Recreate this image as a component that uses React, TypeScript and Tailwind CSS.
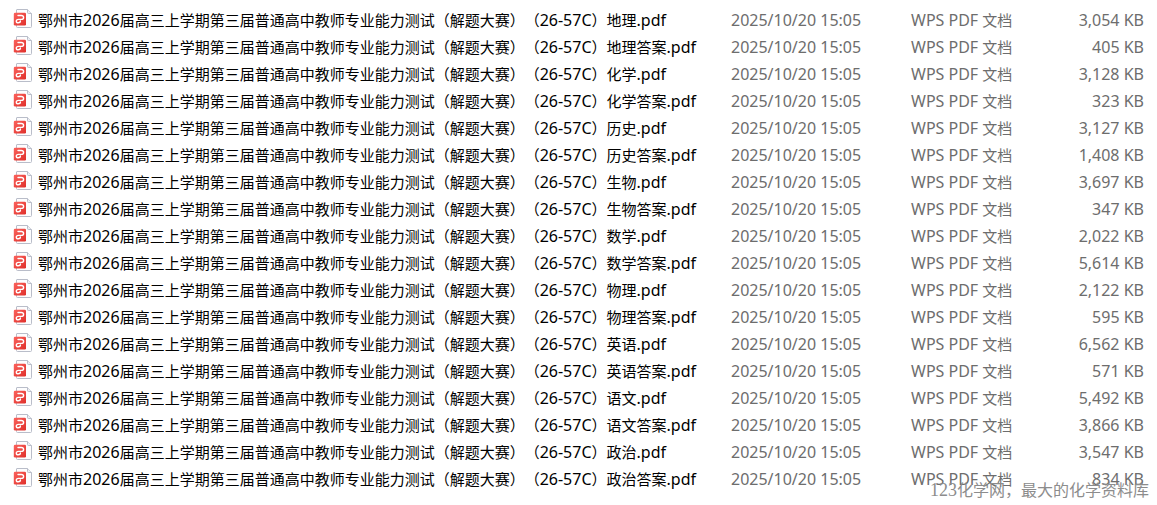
const subjects = ["地理", "化学", "历史", "生物", "数学", "物理", "英语", "语文", "政治"];

const sizes = [
  "3,054 KB", "405 KB", "3,128 KB", "323 KB", "3,127 KB", "1,408 KB",
  "3,697 KB", "347 KB", "2,022 KB", "5,614 KB", "2,122 KB", "595 KB",
  "6,562 KB", "571 KB", "5,492 KB", "3,866 KB", "3,547 KB", "834 KB",
];

const files = sizes.map((size, i) => ({
  title: subjects[Math.floor(i / 2)] + (i % 2 ? "答案" : ""),
  date: "2025/10/20 15:05",
  size,
}));

function PdfIcon() {
  return (
    <svg className="shrink-0" width="20" height="23" viewBox="0 0 20 23" fill="none" aria-hidden="true">
      <defs>
        <linearGradient id="red" x1="0" y1="0" x2="1" y2="1">
          <stop offset="0" stopColor="#fb625c" />
          <stop offset="1" stopColor="#df302b" />
        </linearGradient>
      </defs>
      <path d="M5 0.5H15.5L19.5 4.5V17.5Q19.5 18.5 18.5 18.5H5.5Q4.5 18.5 4.5 17.5V1Q4.5 0.5 5 0.5Z" fill="#fdfdfe" stroke="#b9bdc9" />
      <path d="M15.5 0.5V3.5Q15.5 4.5 16.5 4.5H19.5" fill="#eceef3" stroke="#b9bdc9" />
      <rect x="1.8" y="3.7" width="12.2" height="12.8" rx="1.3" fill="url(#red)" />
      <path
        d="M6 6.5H9.2Q11.6 6.5 11.6 8.5Q11.6 10.4 9.2 10.4H6.5Q4.3 10.4 4.3 12.2Q4.3 13.8 6.2 13.8Q8.4 13.8 8.4 12"
        stroke="#fff"
        strokeWidth="1.4"
        strokeLinecap="round"
      />
    </svg>
  );
}

// latin letters and digits are set a little larger than the chinese text
function Latin({ children }: { children: string }) {
  return <span className="text-[16px] leading-none">{children}</span>;
}

function App() {
  return (
    <div className="relative min-h-screen bg-white pt-[7px] pr-[13px] pl-3 pb-3 font-['Noto_Sans','Noto_Sans_CJK_SC',sans-serif] text-[15px] leading-[27px] whitespace-nowrap [text-spacing-trim:space-all]">
      <table className="w-full table-fixed border-collapse">
        <colgroup>
          <col />
          <col className="w-[180px]" />
          <col className="w-[120px]" />
          <col className="w-[113px]" />
        </colgroup>
        <tbody>
          {files.map((file) => (
            <tr key={file.title} className="h-[27px] text-[#6d6d6d]">
              <td className="p-0 text-black">
                <div className="flex h-[27px] items-center gap-1.5 overflow-hidden">
                  <PdfIcon />
                  <span>
                    鄂州市<Latin>2026</Latin>届高三上学期第三届普通高中教师专业能力测试（解题大赛）（
                    <Latin>26-57C</Latin>）{file.title}
                    <Latin>.pdf</Latin>
                  </span>
                </div>
              </td>
              <td className="p-0">
                <Latin>{file.date}</Latin>
              </td>
              <td className="p-0">
                <Latin>WPS PDF </Latin>文档
              </td>
              <td className="p-0 text-right">
                <Latin>{file.size}</Latin>
              </td>
            </tr>
          ))}
        </tbody>
      </table>
      <div className="absolute right-2 bottom-1 font-['Liberation_Serif','Noto_Sans_CJK_SC',serif] text-[16px] leading-5 text-[#8c8c8c]">
        <span className="text-[18px] leading-none">123</span>化学网，最大的化学资料库
      </div>
    </div>
  );
}

export default App;
